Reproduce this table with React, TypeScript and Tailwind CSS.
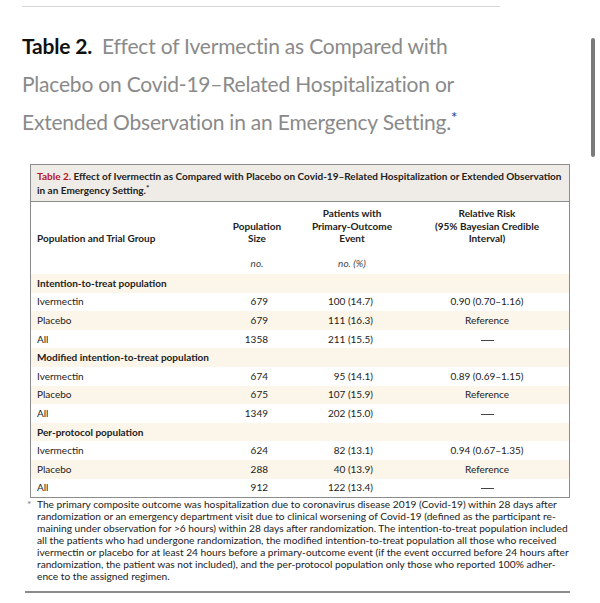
import React from "react";

type Row = { label: string; size?: string; events?: string; rr?: string; section?: boolean };

const rows: Row[] = [
  { label: "Intention-to-treat population", section: true },
  { label: "Ivermectin", size: "679", events: "100 (14.7)", rr: "0.90 (0.70–1.16)" },
  { label: "Placebo", size: "679", events: "111 (16.3)", rr: "Reference" },
  { label: "All", size: "1358", events: "211 (15.5)", rr: "—" },
  { label: "Modified intention-to-treat population", section: true },
  { label: "Ivermectin", size: "674", events: "95 (14.1)", rr: "0.89 (0.69–1.15)" },
  { label: "Placebo", size: "675", events: "107 (15.9)", rr: "Reference" },
  { label: "All", size: "1349", events: "202 (15.0)", rr: "—" },
  { label: "Per-protocol population", section: true },
  { label: "Ivermectin", size: "624", events: "82 (13.1)", rr: "0.94 (0.67–1.35)" },
  { label: "Placebo", size: "288", events: "40 (13.9)", rr: "Reference" },
  { label: "All", size: "912", events: "122 (13.4)", rr: "—" },
];

const footnote = [
  "The primary composite outcome was hospitalization due to coronavirus disease 2019 (Covid-19) within 28 days after",
  "randomization or an emergency department visit due to clinical worsening of Covid-19 (defined as the participant re-",
  "maining under observation for >6 hours) within 28 days after randomization. The intention-to-treat population included",
  "all the patients who had undergone randomization, the modified intention-to-treat population all those who received",
  "ivermectin or placebo for at least 24 hours before a primary-outcome event (if the event occurred before 24 hours after",
  "randomization, the patient was not included), and the per-protocol population only those who reported 100% adher-",
  "ence to the assigned regimen.",
];

const cols = "grid grid-cols-[180px_78px_126px_1fr]";

export default function App() {
  return (
    <div
      className="relative w-[600px] h-[603px] overflow-hidden bg-white text-[#222]"
      style={{ fontFamily: 'Lato, "Open Sans", sans-serif' }}
    >
      <div className="ml-[22px] mt-[6px] w-[478px] border-t border-[#d6d6d6]" />

      <h1 className="pl-[22px] pt-[20px] text-[21px] leading-[38px] tracking-[-0.2px] font-normal text-[#8a8a8a] whitespace-nowrap">
        <span className="font-bold text-[#111] mr-[10px]">Table 2.</span>
        Effect of Ivermectin as Compared with
        <br />
        Placebo on Covid-19–Related Hospitalization or
        <br />
        Extended Observation in an Emergency Setting.
        <span className="relative -top-[7px] leading-none text-[#1a3a8a] text-[15px]">*</span>
      </h1>

      {/* scrollbar */}
      <div className="absolute left-[591px] top-[38px] h-[119px] w-[4px] rounded-full bg-[#7a7a7a]" />

      <div className="ml-[30px] mt-[23px] w-[540px] border-[1.5px] border-[#8c8c8c] text-[10px]">
        <div className="bg-[#efebe7] px-[6px] pt-[4px] pb-[4px] leading-[14px] font-bold text-[#222] border-b-[1.5px] border-[#8c8c8c]">
          <span className="text-[#b8151e]">Table 2.</span> Effect of Ivermectin as Compared with Placebo on
          Covid-19–Related Hospitalization or Extended Observation
          <br />
          in an Emergency Setting.<span className="relative -top-[3px] leading-none text-[8px]">*</span>
        </div>

        <div className={`${cols} pt-[5px] leading-[12.5px] font-bold`}>
          <div className="flex items-end pl-[6px]">Population and Trial Group</div>
          <div className="flex items-end justify-center text-center pl-[14px]">
            Population
            <br />
            Size
          </div>
          <div className="text-center">
            Patients with
            <br />
            Primary-Outcome
            <br />
            Event
          </div>
          <div className="text-center pr-[10px]">
            Relative Risk
            <br />
            (95% Bayesian Credible
            <br />
            Interval)
          </div>
        </div>
        <div className={`${cols} h-[29.5px] items-end italic text-[#444] pb-[5px] leading-[12px]`}>
          <div />
          <div className="text-center pl-[14px]">no.</div>
          <div className="text-center">no. (%)</div>
          <div />
        </div>

        {rows.map((r, i) => (
          <div
            key={i}
            className={`${cols} h-[18.6px] items-center ${i % 2 === 0 ? "bg-[#fcf5ea]" : "bg-white"}`}
          >
            <div className={`pl-[6px] whitespace-nowrap ${r.section ? "font-bold" : ""}`}>{r.label}</div>
            <div className="text-right pr-[21px]">{r.size}</div>
            <div className="text-right pr-[42px]">{r.events}</div>
            <div className="text-center pr-[10px]">{r.rr === "—" ? <span className="inline-block w-[13px] border-t border-[#444] align-middle" /> : r.rr}</div>
          </div>
        ))}
      </div>

      <div className="ml-[25px] w-[545px] border-b-[2px] border-[#8c8c8c] pb-[9px] text-[10.2px] leading-[12px] text-[#222] flex">
        <span className="w-[12px] shrink-0 pl-[2px] text-[#777]">*</span>
        <div className="whitespace-nowrap">
          {footnote.map((line, i) => (
            <div key={i}>{line}</div>
          ))}
        </div>
      </div>
    </div>
  );
}
